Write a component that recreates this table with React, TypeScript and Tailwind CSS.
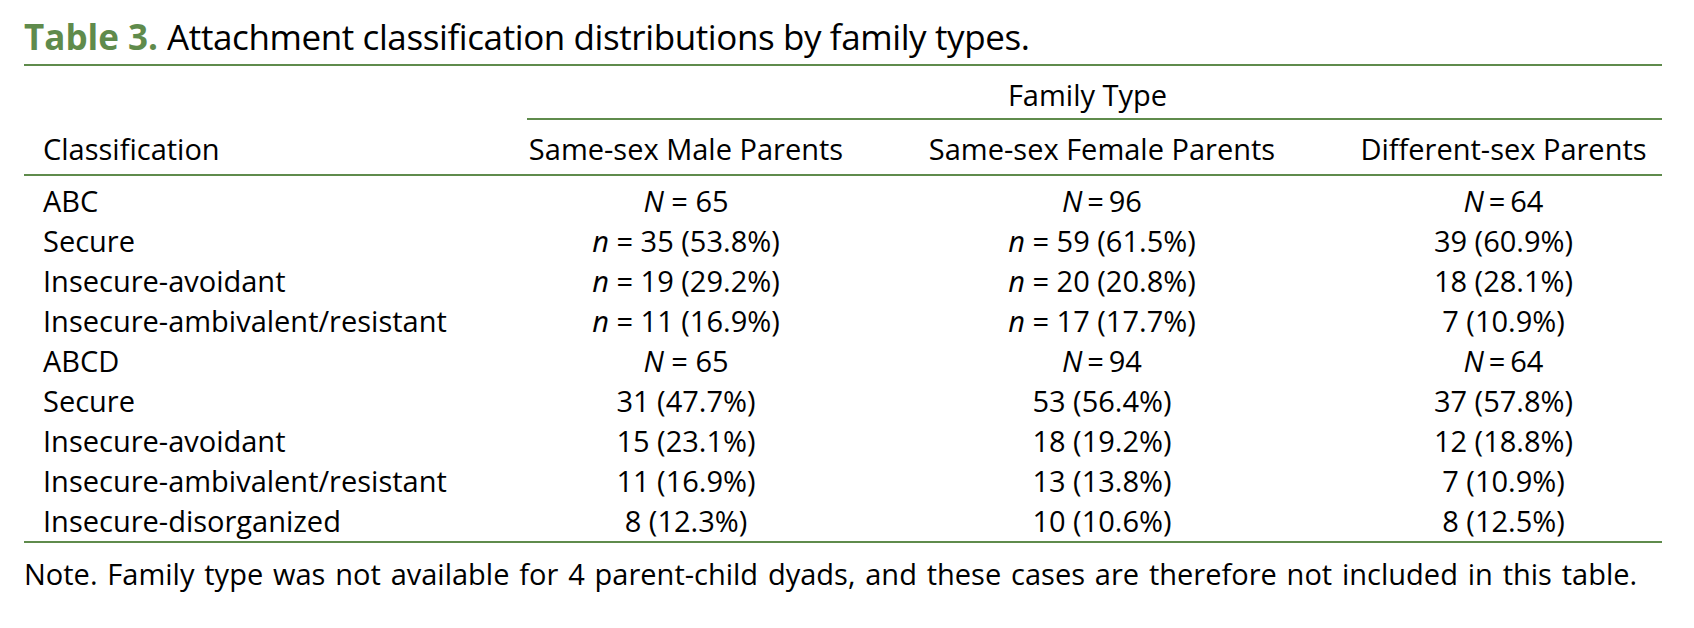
import React from "react";

const I = ({ children }: { children: React.ReactNode }) => <i>{children}</i>;

const data: [string, React.ReactNode, React.ReactNode, React.ReactNode][] = [
  ["ABC", <><I>N</I> = 65</>, <><I>N</I>{"\u2009=\u2009"}96</>, <><I>N</I>{"\u2009=\u2009"}64</>],
  ["Secure", <><I>n</I> = 35 (53.8%)</>, <><I>n</I> = 59 (61.5%)</>, "39 (60.9%)"],
  ["Insecure-avoidant", <><I>n</I> = 19 (29.2%)</>, <><I>n</I> = 20 (20.8%)</>, "18 (28.1%)"],
  ["Insecure-ambivalent/resistant", <><I>n</I> = 11 (16.9%)</>, <><I>n</I> = 17 (17.7%)</>, "7 (10.9%)"],
  ["ABCD", <><I>N</I> = 65</>, <><I>N</I>{"\u2009=\u2009"}94</>, <><I>N</I>{"\u2009=\u2009"}64</>],
  ["Secure", "31 (47.7%)", "53 (56.4%)", "37 (57.8%)"],
  ["Insecure-avoidant", "15 (23.1%)", "18 (19.2%)", "12 (18.8%)"],
  ["Insecure-ambivalent/resistant", "11 (16.9%)", "13 (13.8%)", "7 (10.9%)"],
  ["Insecure-disorganized", "8 (12.3%)", "10 (10.6%)", "8 (12.5%)"],
];

export default function App() {
  return (
    <div
      className="w-[1694px] h-[628px] bg-white text-black overflow-hidden"
      style={{ fontFamily: '"Open Sans", "Noto Sans", sans-serif' }}
    >
      <div className="ml-[24px] w-[1638px]">
        <div className="pt-[17px] pb-[7px] text-[35px] leading-[40px] whitespace-nowrap">
          <span className="font-bold text-[#5f8b4c]">Table 3.</span>{" "}
          <span className="tracking-[-0.4px]">Attachment classification distributions by family types.</span>
        </div>
        <div className="h-[2px] bg-[#5f8b4c]" />
        <div className="text-[29px]">
          <div className="grid grid-cols-[503px_1135px]">
            <div />
            <div>
              <div className="pt-[11px] pb-[5px] leading-[36px] text-center pr-[14px]">Family Type</div>
              <div className="h-[2px] bg-[#5f8b4c]" />
            </div>
          </div>
          <div className="grid grid-cols-[503px_318px_514px_303px] pt-[11px] pb-[7px] leading-[36px] whitespace-nowrap">
            <div className="pl-[19px]">Classification</div>
            <div className="text-center">Same-sex Male Parents</div>
            <div className="text-center">Same-sex Female Parents</div>
            <div className="text-center pr-[14px]">Different-sex Parents</div>
          </div>
          <div className="h-[2px] bg-[#5f8b4c]" />
          <div className="pt-[5px]">
            {data.map((r, i) => (
              <div
                key={i}
                className="grid grid-cols-[503px_318px_514px_303px] leading-[40px] h-[40px] whitespace-nowrap"
              >
                <div className="pl-[19px]">{r[0]}</div>
                <div className="text-center">{r[1]}</div>
                <div className="text-center">{r[2]}</div>
                <div className="text-center pr-[14px]">{r[3]}</div>
              </div>
            ))}
          </div>
          <div className="h-[2px] bg-[#5f8b4c]" />
          <div className="pt-[11px] leading-[40px] whitespace-nowrap [word-spacing:2.3px]">
            Note. Family type was not available for 4 parent-child dyads, and these cases are therefore not included in this table.
          </div>
        </div>
      </div>
    </div>
  );
}
